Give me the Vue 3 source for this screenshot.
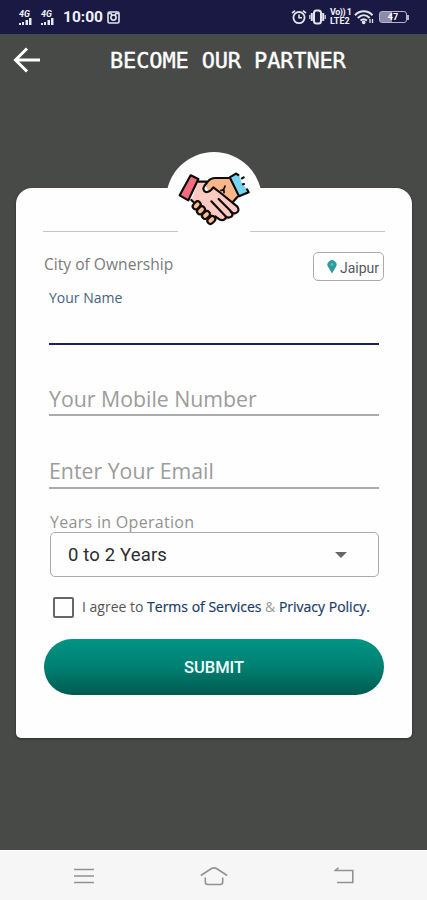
<script setup>
import { ref } from "vue";

const name = ref("");
const mobile = ref("");
const email = ref("");
const agreed = ref(false);
const city = ref("Jaipur");
const years = ref("0 to 2 Years");

function toggleAgree() {
  agreed.value = !agreed.value;
}
</script>

<template>
<div class="screen">
  <div class="status">
    <div class="status-left">
      <div class="signal" v-for="n in 2" :key="n">
        <span>4G</span>
        <svg width="13" height="7" viewBox="0 0 13 7" fill="#e8e8f4">
          <rect x="0" y="5" width="2" height="2" />
          <rect x="3" y="4" width="2" height="3" />
          <rect x="6.5" y="2" width="2.5" height="5" />
          <rect x="10" y="0" width="2.5" height="7" />
        </svg>
      </div>
      <b class="clock">10:00</b>
      <svg class="insta" width="13" height="13" viewBox="0 0 13 13" fill="none" stroke="#e4e4f0">
        <rect x="1" y="1" width="11" height="11" rx="1.5" stroke-width="1.6" />
        <path d="M1.5 2.5h2.500l1 2h3l1-2h2.500" stroke-width="1.6" />
        <circle cx="6.5" cy="6.6" r="2.6" stroke-width="1.6" fill="#191943" />
      </svg>
    </div>
    <div class="status-right">
      <svg width="16" height="16" viewBox="0 0 16 16" fill="none" stroke="#e4e4f0" stroke-width="1.8">
        <circle cx="8" cy="8.6" r="5.6" />
        <path d="M1 4.2L4 1.6M15 4.2L12 1.6M8 5.5v3.2h3" stroke-width="1.6" />
      </svg>
      <svg width="17" height="16" viewBox="0 0 17 16" fill="none" stroke="#e4e4f0" stroke-width="2">
        <rect x="5" y="1.4" width="7" height="13.2" rx="2.5" />
        <path d="M2.8 4v8M14.2 4v8" />
        <path d="M.8 6v4M16.2 6v4" stroke-width="1.2" />
      </svg>
      <div class="volte"><span>Vo)) 1</span><span>LTE2</span></div>
      <svg width="20" height="16" viewBox="0 0 20 16" fill="none" stroke="#e4e4f0" stroke-width="2">
        <path d="M1 6.2C6 1 13.5 1 18.5 6.2M3.8 9C7.5 5.3 12 5.3 15.7 9M6.5 11.6C8.7 9.7 10.8 9.7 13 11.6" />
        <circle cx="9.7" cy="13.3" r=".9" />
        <path d="M16 10v4M18.5 10v4" stroke-width="1.3" />
      </svg>
      <div class="battery"><div class="battery-body">47</div><i></i></div>
    </div>
  </div>

  <header class="bar">
    <svg width="28" height="26" viewBox="0 0 28 26" fill="none" stroke="#fff" stroke-width="3">
      <path d="M27 13H3M14 1.5L2.5 13L14 24.5" />
    </svg>
    <h1>BECOME OUR PARTNER</h1>
  </header>

  <main>
    <div class="card">
      <div class="badge">
        <svg width="72" height="58" viewBox="84 93 216 174" stroke="#0c0a0a" stroke-width="6.5" stroke-linejoin="round" stroke-linecap="round">
          <path d="M160 127L196 114H236L262 167L240 196L180 160Z" fill="#fbb688" stroke="none" />
          <path d="M144 125L168 128L160 144Q162 158 178 153L192 141L262 199Q272 215 256 222Q252 234 240 234Q226 246 212 239L190 230L124 181Z" fill="#fec9c0" stroke="none" />
          <g fill="#fdbd8e">
            <rect x="127" y="187" width="26" height="18" rx="9" transform="rotate(-45 140 196)" />
            <rect x="140" y="202" width="26" height="18" rx="9" transform="rotate(-45 153 211)" />
            <rect x="155" y="216" width="26" height="18" rx="9" transform="rotate(-45 168 225)" />
            <rect x="171" y="231" width="26" height="18" rx="9" transform="rotate(-45 184 240)" />
          </g>
          <!-- thumb and back of the hands -->
          <path d="M145 125H170M196 114H236M196 114Q182 114 174 124L163 138Q156 150 167 156Q178 158 190 142L212 159L262 200Q270 212 260 218Q250 224 242 215M262 171L248 187M124 180L131 187" fill="none" />
          <!-- fingers -->
          <path d="M206 177L242 213Q252 222 244 230Q234 236 226 228M184 184L226 228Q230 236 220 240Q212 242 204 235L196 229" fill="none" />
          <path d="M213 151Q222 152 225 138M222 151V158" fill="none" stroke-width="5" />
          <path d="M122 106L145 117L115 181L89 166Z" fill="#f46d7f" />
          <path d="M239 112L258 101L269 109L275 128L284 139L296 158L269 168Z" fill="#78d5f2" stroke="none" />
          <path d="M258 101L239 112L267 169L296 157L291 148M258 101L265 105M276 115L281 112M279 133L282 132" fill="none" />
        </svg>
      </div>
      <div class="divider"><i></i><i></i></div>

      <div class="city">
        <span class="city-label">City of Ownership</span>
        <button class="city-btn">
          <svg width="10" height="14" viewBox="0 0 10 14">
            <path d="M5 13.5L1.5 7.5A4.5 4.5 0 1 1 8.5 7.5Z" fill="#2c9c9c" />
            <circle cx="5" cy="4.5" r="1.5" fill="#5fb8b7" />
          </svg>
          <span>{{ city }}</span>
        </button>
      </div>

      <form class="form" @submit.prevent>
        <div class="field active">
          <label>Your Name</label>
          <input type="text" v-model="name" />
        </div>
        <div class="field mobile">
          <input type="text" v-model="mobile" placeholder="Your Mobile Number" />
        </div>
        <div class="field email">
          <input type="text" v-model="email" placeholder="Enter Your Email" />
        </div>
        <label class="years-label">Years in Operation</label>
        <div class="select">
          <span>{{ years }}</span>
          <i class="caret"></i>
        </div>
        <div class="agree" @click="toggleAgree">
          <i class="box" :class="{ on: agreed }"></i>
          <p>I agree to <b>Terms of Services</b> <em>&amp;</em> <b>Privacy Policy.</b></p>
        </div>
      </form>
      <button class="submit">SUBMIT</button>
    </div>
  </main>

  <nav class="navbar">
    <svg width="20" height="18" viewBox="0 0 20 18" fill="none" stroke="#929292" stroke-width="1.6">
      <path d="M0 2.5H20M0 9H20M0 15.5H20" />
    </svg>
    <svg width="28" height="20" viewBox="0 0 28 20" fill="none" stroke="#929292" stroke-width="1.6">
      <path d="M.8 9.5L11.5 2.5Q14 1.2 16.5 2.5L27.2 9.5M5.3 11.5V16Q5.3 18.5 7.8 18.5H20.2Q22.7 18.5 22.7 16V11.5" />
    </svg>
    <svg width="20" height="18" viewBox="0 0 20 18" fill="none" stroke="#929292" stroke-width="1.6">
      <path d="M4.5 .8L1.2 3.500H18.8V15.5H3" />
    </svg>
  </nav>
</div>
</template>

<style>
body {
  margin: 0;
  background: #484a48;
}
</style>

<style scoped>
* {
  box-sizing: border-box;
}
.screen {
  display: flex;
  flex-direction: column;
  width: 427px;
  height: 900px;
  overflow: hidden;
  background: #484a48;
  font-family: "Open Sans", "Noto Sans", sans-serif;
}
svg {
  display: block;
  flex: none;
}
.status {
  display: flex;
  justify-content: space-between;
  height: 34px;
  padding: 0 18px 0 19px;
  background: #191943;
  color: #f0f0fa;
}
.status-left,
.status-right {
  display: flex;
  align-items: center;
}
.signal {
  width: 22px;
  font: italic bold 9px/8px Roboto, sans-serif;
}
.signal span {
  display: block;
}
.clock {
  width: 44px;
  font: bold 15.5px/20px Roboto, sans-serif;
}
.status-right {
  gap: 2px;
}
.volte {
  display: flex;
  flex-direction: column;
  width: 24px;
  padding-left: 2px;
  font: bold 9px/9px Roboto, sans-serif;
  white-space: nowrap;
}
.volte span:first-child {
  letter-spacing: -0.5px;
}
.battery {
  display: flex;
  align-items: center;
  margin-left: 3px;
}
.battery-body {
  width: 28px;
  height: 12px;
  border: 1.5px solid #b4b4ca;
  border-radius: 3px;
  background: linear-gradient(90deg, #8c8ca8 45%, #191943 45%);
  color: #fff;
  text-align: center;
  font: bold 9px/10px Roboto, sans-serif;
}
.battery i {
  width: 2px;
  height: 5px;
  background: #b4b4ca;
}

.bar {
  display: flex;
  align-items: center;
  height: 52px;
  padding-left: 13px;
}
.bar h1 {
  margin: 1px 0 0 69px;
  color: #fff;
  font: normal 22px/28px "DejaVu Sans Mono", monospace;
  letter-spacing: -0.15px;
  -webkit-text-stroke: 0.4px #fff;
}

main {
  flex: 1;
  padding: 102px 15px 0 16px;
}
.card {
  position: relative;
  height: 550px;
  padding: 43px 27px 0;
  border-radius: 16px 16px 5px 5px;
  background: #fefefe;
  box-shadow: 0 1px 3px rgba(0, 0, 0, 0.4);
}
.badge {
  position: absolute;
  top: -36px;
  left: 150px;
  display: flex;
  justify-content: center;
  width: 96px;
  height: 96px;
  padding-top: 19px;
  border-radius: 50%;
  background: #fefefe;
}
.divider {
  display: flex;
  justify-content: space-between;
}
.divider i {
  width: 136px;
  height: 1px;
  background: #c6c6c6;
}
.city {
  display: flex;
  justify-content: space-between;
  margin: 20px 1px 0;
}
.city-label {
  color: #7b7b7b;
  font-size: 15.6px;
  line-height: 24px;
}
.city-btn {
  display: flex;
  align-items: center;
  width: 71px;
  height: 29px;
  padding: 0 0 0 13px;
  border: 1px solid #aaa;
  border-radius: 5px;
  background: #fff;
  color: #555861;
  font: 14px/20px Roboto, sans-serif;
}
.city-btn span {
  margin: 2px 0 0 3px;
}
.form {
  padding: 4px 6px 0;
}
.field {
  display: flex;
  flex-direction: column;
  justify-content: flex-end;
  border-bottom: 2px solid #ababab;
}
.field input {
  width: 100%;
  height: 24px;
  padding: 0;
  border: 0;
  outline: 0;
  background: none;
  color: #333;
  font: 21.3px/24px "Open Sans", sans-serif;
}
.field input::placeholder {
  color: #9c9c9c;
}
.field.active {
  justify-content: flex-start;
  height: 60px;
  border-color: #20205c;
}
.field.active label {
  color: #47617f;
  font-size: 14px;
  line-height: 25px;
}
.field.mobile {
  height: 71px;
  padding-bottom: 3px;
}
.field.email {
  height: 73px;
  padding-bottom: 4px;
}
.years-label {
  display: block;
  margin: 22px 0 0 1px;
  color: #929292;
  font-size: 16px;
  letter-spacing: 0.3px;
  line-height: 22px;
  height: 21px;
}
.select {
  display: flex;
  align-items: center;
  justify-content: space-between;
  height: 45px;
  margin-left: 1px;
  padding: 1px 31px 0 17px;
  border: 1px solid #aaa;
  border-radius: 5px;
  color: #2c2c2c;
  font: 18.5px/24px Roboto, sans-serif;
  letter-spacing: 0.15px;
}
.caret {
  border: 6px solid transparent;
  border-top-color: #666;
  border-bottom: 0;
}
.agree {
  display: flex;
  align-items: center;
  height: 22px;
  margin: 19px 0 0 4px;
}
.box {
  flex: none;
  width: 21px;
  height: 21px;
  border: 2px solid #666;
  border-radius: 2px;
}
.box.on {
  background: #00897b;
}
.agree p {
  margin: 0 0 1px 8px;
  color: #555;
  font-size: 14px;
  white-space: nowrap;
}
.agree b {
  color: #1c3a68;
  font-weight: 500;
  -webkit-text-stroke: 0.2px #1c3a68;
}
.agree em {
  color: #999;
  font-style: normal;
}
.submit {
  display: block;
  width: 340px;
  height: 56px;
  margin: 21px 0 0 1px;
  padding: 2px 0 0;
  border: 0;
  border-radius: 28px;
  background: linear-gradient(#009484, #008072 50%, #005a50);
  color: #f4ffff;
  font: 500 16.5px/20px Roboto, sans-serif;
}

.navbar {
  display: flex;
  align-items: center;
  justify-content: space-between;
  height: 50px;
  padding: 0 73px 0 74px;
  border-top: 1px solid #fff;
  background: #f6f6f6;
}
</style>
